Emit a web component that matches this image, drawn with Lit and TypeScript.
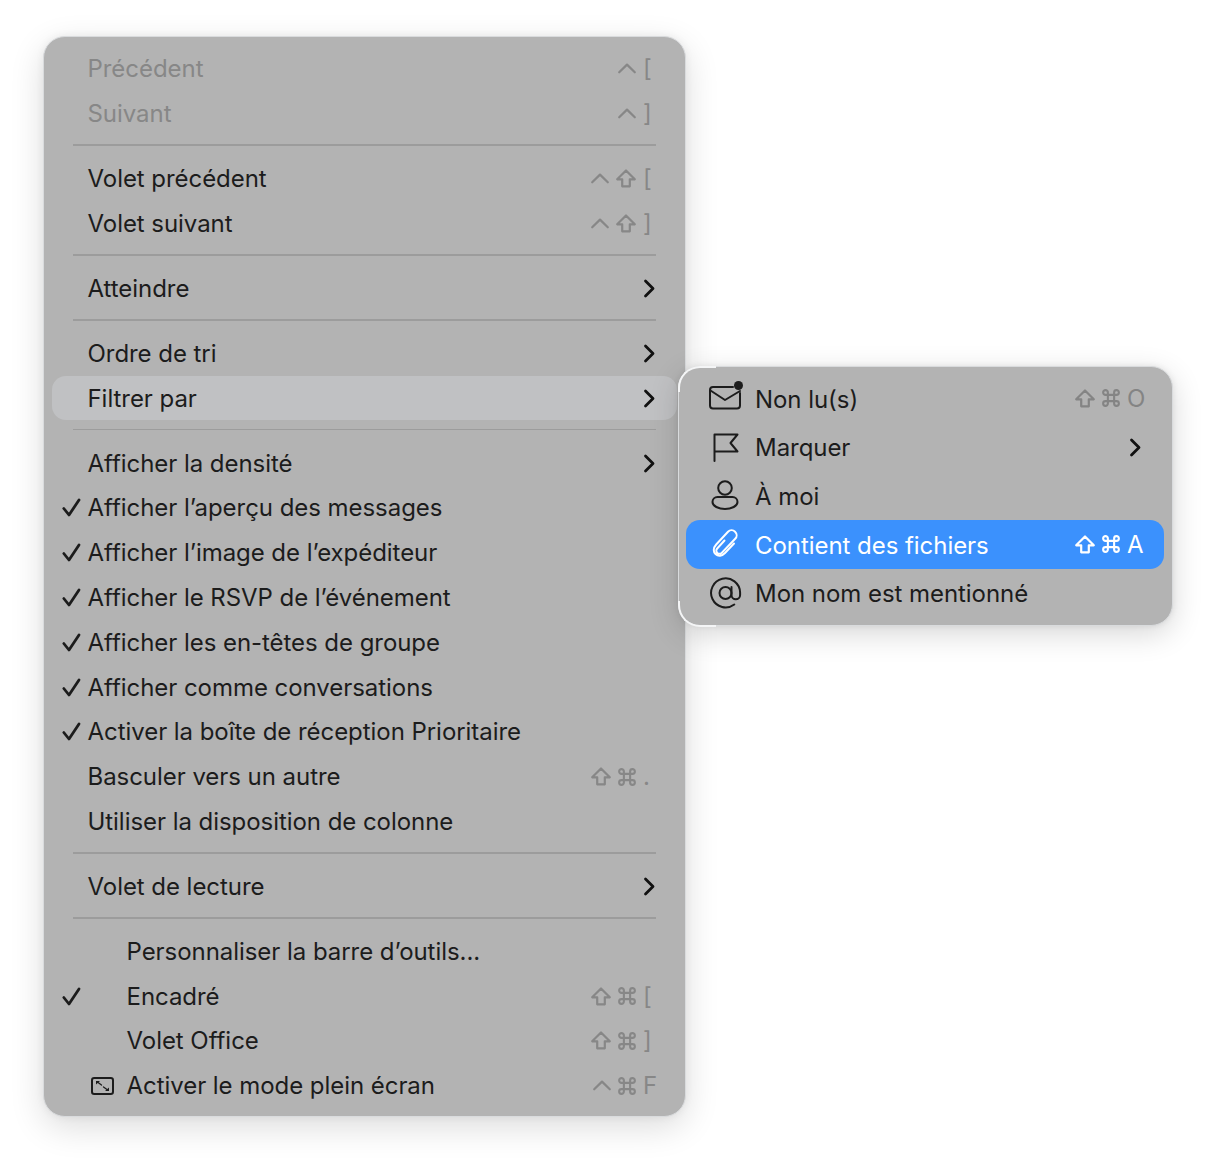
import { LitElement, html, css } from "lit";
import { customElement } from "lit/decorators.js";

const ctrl = html`<svg class="mod" width="18" height="11" viewBox="0 0 18 11"><path d="M1.200 9.300 9 1.600l7.800 7.700" /></svg>`;
const shift = html`<svg class="mod" width="20" height="19" viewBox="0 0 20 19"><path d="M10 1.500 18.800 10.300h-5v7H6.200v-7H1.200Z" /></svg>`;
const cmd = html`<svg class="mod" width="18" height="18" viewBox="0 0 19 19"><path d="M6.200 6.200h6.600v6.600H6.200ZM6.200 6.200V3.700a2.500 2.500 0 1 0-2.500 2.500h11.600a2.500 2.500 0 1 0-2.500-2.500v11.600a2.500 2.500 0 1 0 2.500-2.500H3.700a2.500 2.500 0 1 0 2.500 2.500Z" /></svg>`;
const chev = html`<svg class="chev" width="13" height="19" viewBox="0 0 13 19"><path d="M2.500 2 10 9.500 2.500 17" /></svg>`;
const check = html`<svg class="check" width="19" height="19" viewBox="0 0 19 19"><path d="M1.800 10.500 7 17 17 2" /></svg>`;
const fullscreen = html`<svg class="ico" width="23" height="18" viewBox="0 0 23 18"><rect x="1" y="1" width="21" height="16" rx="2.200" /><path class="thin" d="M6 4.800 10.500 8M12.500 10l4.500 3.200" /><path class="fill" d="M5 4h4L5 7.500ZM18 14h-4l4-3.500Z" /></svg>`;

const mail = html`<svg class="ico" width="34" height="30" viewBox="0 0 34 30"><path d="M25 4H5a3 3 0 0 0-3 3v15.500a3 3 0 0 0 3 3h24a3 3 0 0 0 3-3V10" /><path d="M2.500 7.500 17 17 32 8" /><circle class="fill" cx="30.500" cy="2.500" r="4.500" /></svg>`;
const flag = html`<svg class="ico" width="34" height="30" viewBox="0 0 34 30"><path d="M6.500 29V2.500h23l-7 8.500 7 8.500h-23" /></svg>`;
const person = html`<svg class="ico" width="34" height="30" viewBox="0 0 34 30"><circle cx="17" cy="7" r="6.800" /><path d="M9.500 16h15a5 5 0 0 1 5 5c0 4-6 7-12.500 7S4.500 25 4.500 21a5 5 0 0 1 5-5Z" /></svg>`;
const clip = html`<svg class="ico" width="34" height="30" viewBox="0 0 34 30"><g transform="translate(2 0)"><path d="M14.500 11.500 7.200 19.500a3.100 3.100 0 0 0 4.500 4.400L25.200 9.800a5 5 0 0 0-7.200-7L6.200 15.500c-3.400 3.700-2.900 7.700-.5 9.800 2.600 2.300 6.300 1.800 9.300-1.300l9-9.500" /></g></svg>`;
const at = html`<svg class="ico at" width="36" height="36" viewBox="0 0 36 36"><circle cx="17.500" cy="18" r="6" /><path d="M23.500 12v8a4.300 4.300 0 0 0 8.600 0v-2.500a14.500 14.500 0 1 0-5.800 12" /></svg>`;

type Row = { t?: string; sep?: boolean; dis?: boolean; chk?: boolean; sub?: boolean; hov?: boolean; mods?: any[]; key?: string; ind?: boolean; icon?: any };

const rows: Row[] = [
  { t: "Précédent", dis: true, mods: [ctrl], key: "[" },
  { t: "Suivant", dis: true, mods: [ctrl], key: "]" },
  { sep: true },
  { t: "Volet précédent", mods: [ctrl, shift], key: "[" },
  { t: "Volet suivant", mods: [ctrl, shift], key: "]" },
  { sep: true },
  { t: "Atteindre", sub: true },
  { sep: true },
  { t: "Ordre de tri", sub: true },
  { t: "Filtrer par", sub: true, hov: true },
  { sep: true },
  { t: "Afficher la densité", sub: true },
  { t: "Afficher l’aperçu des messages", chk: true },
  { t: "Afficher l’image de l’expéditeur", chk: true },
  { t: "Afficher le RSVP de l’événement", chk: true },
  { t: "Afficher les en-têtes de groupe", chk: true },
  { t: "Afficher comme conversations", chk: true },
  { t: "Activer la boîte de réception Prioritaire", chk: true },
  { t: "Basculer vers un autre", mods: [shift, cmd], key: "." },
  { t: "Utiliser la disposition de colonne" },
  { sep: true },
  { t: "Volet de lecture", sub: true },
  { sep: true },
  { t: "Personnaliser la barre d’outils...", ind: true },
  { t: "Encadré", ind: true, chk: true, mods: [shift, cmd], key: "[" },
  { t: "Volet Office", ind: true, mods: [shift, cmd], key: "]" },
  { t: "Activer le mode plein écran", ind: true, icon: fullscreen, mods: [ctrl, cmd], key: "F" },
];

const subs: Row[] = [
  { t: "Non lu(s)", icon: mail, mods: [shift, cmd], key: "O" },
  { t: "Marquer", icon: flag, sub: true },
  { t: "À moi", icon: person },
  { t: "Contient des fichiers", icon: clip, hov: true, mods: [shift, cmd], key: "A" },
  { t: "Mon nom est mentionné", icon: at },
];

@customElement("app-root")
export class AppRoot extends LitElement {
  static styles = css`
    :host { display: block; height: 1167px; background: #fff; font-family: Inter, "Liberation Sans", sans-serif; }
    .page { padding: 36px 0 0 43px; }
    .stage { position: relative; width: 643px; }
    .menu {
      box-sizing: border-box; width: 643px; height: 1081px; padding: 9.300px 8px 7px;
      background: #b3b3b3; border-radius: 22px;
      border: 1.500px solid #d9dbdd;
      box-shadow: 0 10px 34px rgba(0,0,0,.14), 0 0 8px rgba(0,0,0,.06);
    }
    .row {
      display: flex; align-items: center; height: 44.800px; border-radius: 14px;
      font-size: 24px; letter-spacing: -0.050px; color: #1c1c1c; white-space: nowrap;
    }
    .row.hov { background: #c0c1c3; }
    .row.dis { color: #878787; }
    .cell-check { width: 35.500px; flex: none; display: flex; justify-content: flex-end; padding-right: 7px; box-sizing: border-box; }
    .cell-icon { width: 39px; flex: none; display: flex; align-items: center; padding-left: 3px; box-sizing: border-box; }
    .label { flex: 1; }
    .sep { height: 20.200px; display: flex; align-items: center; padding: 0 21px 0 20.500px; margin-top: -1px; margin-bottom: 1px; }
    .sep i { display: block; height: 1.500px; flex: 1; background: #9c9c9c; }
    .shortcut { display: flex; align-items: center; gap: 7px; color: #878787; }
    .key { width: 34px; font-size: 24px; line-height: 1; box-sizing: border-box; padding-top: 1px; }
    .chev-cell { display: flex; margin-right: 21px; }
    svg { overflow: visible; }
    svg path, svg circle, svg rect { fill: none; stroke-linejoin: round; stroke-linecap: round; }
    .mod path { stroke: currentColor; stroke-width: 2.200; }
    .chev path { stroke: #111; stroke-width: 2.800; }
    .check path { stroke: #1c1c1c; stroke-width: 2.800; }
    .ico path, .ico circle, .ico rect { stroke: currentColor; stroke-width: 2; }
    .ico .fill { fill: currentColor; stroke-width: 0; }
    .ico .thin { stroke-width: 1.300; }
    .at { margin: -3px 0 -3px 0; }
    .sub {
      position: absolute; left: 635px; top: 330px; box-sizing: border-box; width: 495px; height: 260px;
      padding: 7px 8px 7px 7px; background: #b3b3b3; border-radius: 22px;
      border: 1.500px solid #d9dbdd;
      box-shadow: 0 8px 30px rgba(0,0,0,.16), 0 0 6px rgba(0,0,0,.08);
    }
    .sub .row { height: 48.700px; }
    .sub .row.hov { background: #3b91fd; color: #fff; }
    .sub .row.hov .shortcut { color: #fff; }
    .sub .label { padding-top: 1.500px; }
    .sub .cell-icon { padding-left: 22px; width: 69px; }
    .sub .shortcut { color: #848484; }
    .sub .key { width: 37px; padding-top: 2px; }
    .sub .chev-cell { margin-right: 22px; }
    .corner { position: absolute; left: -1.500px; width: 38px; height: 26px; border: 0 solid #f4f5f6; border-left-width: 2px; box-sizing: border-box; }
    .corner.t { top: -1.500px; border-top-width: 2px; border-top-left-radius: 22px; }
    .corner.b { bottom: -1.500px; border-bottom-width: 2px; border-bottom-left-radius: 22px; }
  `;

  private renderRow(r: Row, isSub = false) {
    if (r.sep) return html`<div class="sep"><i></i></div>`;
    const cls = ["row", r.dis ? "dis" : "", r.hov ? "hov" : ""].join(" ");
    return html`<div class=${cls}>
      ${isSub ? "" : html`<div class="cell-check">${r.chk ? check : ""}</div>`}
      ${r.ind || isSub ? html`<div class="cell-icon">${r.icon ?? ""}</div>` : ""}
      <div class="label">${r.t}</div>
      ${r.mods ? html`<div class="shortcut">${r.mods}<span class="key">${r.key}</span></div>` : ""}
      ${r.sub ? html`<div class="chev-cell">${chev}</div>` : ""}
    </div>`;
  }

  render() {
    return html`<div class="page"><div class="stage">
      <div class="menu">${rows.map((r) => this.renderRow(r))}</div>
      <div class="sub">
        <div class="corner t"></div><div class="corner b"></div>
        ${subs.map((r) => this.renderRow(r, true))}
      </div>
    </div></div>`;
  }
}
